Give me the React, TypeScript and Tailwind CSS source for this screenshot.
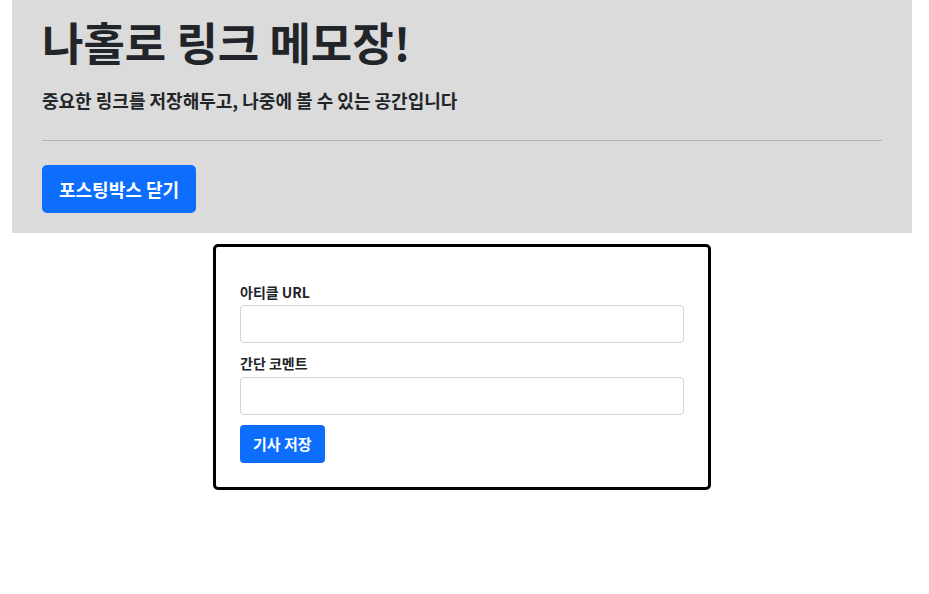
export default function App() {
  const font = { fontFamily: '"Noto Sans CJK KR", "Noto Sans", sans-serif' };
  return (
    <div className="min-h-[594px] bg-white text-[#212529]" style={font}>
      {/* jumbotron */}
      <div className="ml-[12px] w-[900px] bg-[#dbdbdb] px-[30px] pt-[12px] pb-[20px]">
        <h1 className="text-[45px] font-bold leading-[60px]">나홀로 링크 메모장!</h1>
        <p className="mt-[15px] text-[18px] font-bold leading-[26px]">
          중요한 링크를 저장해두고, 나중에 볼 수 있는 공간입니다
        </p>
        <hr className="mt-[27px] border-t border-[#b3b3b3]" />
        <button className="mt-[24px] h-[48px] rounded-[5px] bg-[#0d6efd] px-[17px] text-[18px] font-bold text-white">
          포스팅박스 닫기
        </button>
      </div>

      {/* posting box */}
      <div className="mt-[11px] ml-[213px] w-[498px] rounded-[5px] border-[3px] border-black px-[24px] pt-[35px] pb-[24px]">
        <label className="block text-[14px] font-bold leading-[20px]">아티클 URL</label>
        <input className="mt-[3px] block h-[38px] w-full rounded-[4px] border border-[#ced4da] bg-white px-3" />
        <label className="mt-[10px] block text-[14px] font-bold leading-[20px]">간단 코멘트</label>
        <input className="mt-[4px] block h-[38px] w-full rounded-[4px] border border-[#ced4da] bg-white px-3" />
        <button className="mt-[10px] h-[38px] rounded-[4px] bg-[#0d6efd] px-[13px] text-[15px] font-bold text-white">
          기사 저장
        </button>
      </div>
    </div>
  );
}
